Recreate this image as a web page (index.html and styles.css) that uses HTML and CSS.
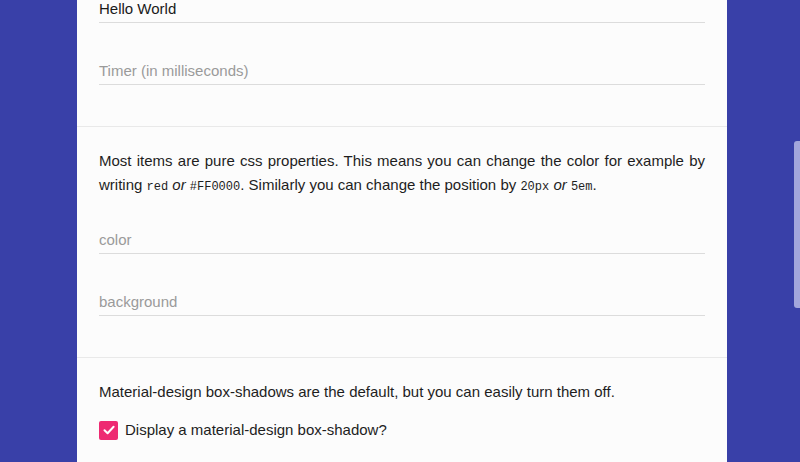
FILE: index.html
```html
<!DOCTYPE html>
<html>
<head>
<meta charset="utf-8">
<link rel="stylesheet" href="styles.css">
</head>
<body>
<div class="page">
  <main class="card">
    <section class="section section-top">
      <div class="fields">
        <div class="field field-flush"><span class="value">Hello World</span></div>
        <div class="field"><span class="placeholder">Timer (in milliseconds)</span></div>
      </div>
    </section>
    <section class="section">
      <p class="text justify">Most items are pure css properties. This means you can change the color for example by writing <code>red</code> <em>or</em> <code>#FF0000</code>. Similarly you can change the position by <code>20px</code> <em>or</em> <code>5em</code>.</p>
      <div class="fields">
        <div class="field"><span class="placeholder">color</span></div>
        <div class="field"><span class="placeholder">background</span></div>
      </div>
    </section>
    <section class="section">
      <p class="text">Material-design box-shadows are the default, but you can easily turn them off.</p>
      <label class="check">
        <span class="box"><svg width="14" height="14" viewBox="0 0 14 14"><path d="M2.5 7.2 L5.6 10.2 L11.6 3.8" fill="none" stroke="#fff" stroke-width="2" stroke-linecap="round" stroke-linejoin="round"/></svg></span>
        <span class="check-label">Display a material-design box-shadow?</span>
      </label>
    </section>
  </main>
  <div class="scrollbar"><div class="thumb"></div></div>
</div>
</body>
</html>
```
FILE: styles.css
```css
html, body {
  margin: 0;
  padding: 0;
  height: 100%;
}
body {
  background: #3940a8;
  font-family: "Liberation Sans", Arial, sans-serif;
  font-size: 15px;
  color: #1e1e1e;
  overflow: hidden;
}
.page {
  display: flex;
  height: 462px;
}
.card {
  margin-left: 77px;
  width: 650px;
  background: #fcfcfc;
  height: 462px;
}
.section {
  padding: 22px 22px 41px 22px;
  border-bottom: 1px solid #e9e9e9;
}
.section-top {
  padding-top: 0;
}
.fields {
  display: flex;
  flex-direction: column;
  gap: 5px;
}
.field {
  padding-top: 34px;
  padding-bottom: 4px;
  border-bottom: 1px solid #dcdcdc;
  line-height: 18px;
}
.field-flush {
  padding-top: 0;
}
.value {
  color: #1a1a1a;
}
.placeholder {
  color: #9a9a9a;
}
.text {
  margin: 0;
  line-height: 24px;
}
.justify {
  text-align: justify;
}
code {
  font-family: "Liberation Mono", "Courier New", monospace;
  font-size: 12px;
  line-height: 1;
}
em {
  font-style: italic;
}
.check {
  display: flex;
  align-items: center;
  gap: 7px;
  margin-top: 14px;
  line-height: 24px;
}
.box {
  width: 19px;
  height: 19px;
  border-radius: 2px;
  background: #ee2a72;
  display: flex;
  align-items: center;
  justify-content: center;
}
.scrollbar {
  margin-left: auto;
  width: 6px;
  padding-top: 141px;
}
.thumb {
  width: 6px;
  height: 167px;
  border-radius: 3px 0 0 3px;
  background: #a3a6dc;
}
```
